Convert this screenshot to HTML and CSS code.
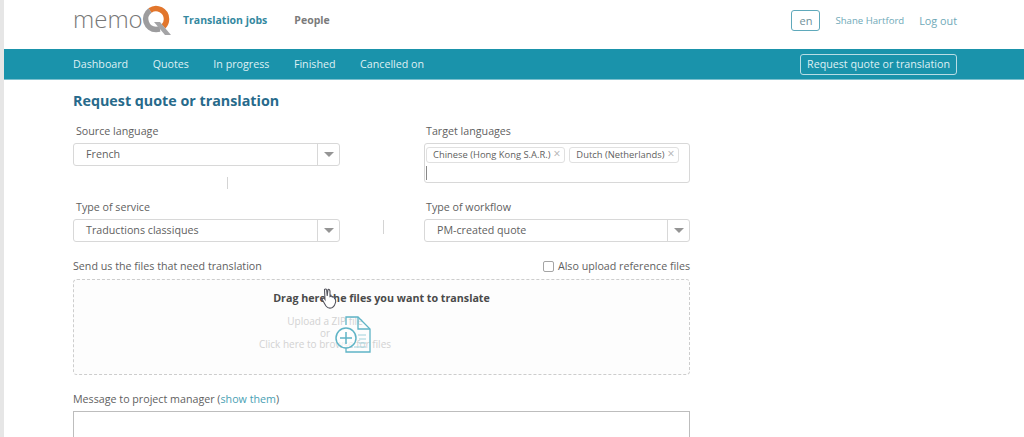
FILE: index.html
```html
<!DOCTYPE html>
<html lang="en">
<head>
<meta charset="utf-8">
<title>Request quote or translation</title>
<link rel="stylesheet" href="styles.css">
</head>
<body>
<header class="top">
  <a class="logo">
    <span class="logo-word">memo</span>
    <svg class="logo-q" width="29" height="32" viewBox="0 0 29 32" fill="none">
      <path d="M8 6.500A10.500 10.500 0 0 1 24.500 15A10.500 10.500 0 0 1 21.500 22.500" stroke="#e2762c" stroke-width="5.500"/>
      <path d="M8 6.500A10.500 10.500 0 0 0 14 25.500L18 25" stroke="#9c9c9e" stroke-width="5.500"/>
      <path d="M12 18L18 18L29 31L23 31Z" fill="#a4a4a6"/>
    </svg>
  </a>
  <a class="app-link active">Translation jobs</a>
  <a class="app-link">People</a>
  <div class="top-right">
    <span class="lang">en</span>
    <a class="user">Shane Hartford</a>
    <a class="logout">Log out</a>
  </div>
</header>
<nav class="bar">
  <a>Dashboard</a>
  <a>Quotes</a>
  <a>In progress</a>
  <a>Finished</a>
  <a>Cancelled on</a>
  <a class="bar-btn">Request quote or translation</a>
</nav>
<main class="content">
  <h1>Request quote or translation</h1>
  <div class="grid">
    <div class="field first">
      <label>Source language</label>
      <div class="select"><span>French</span><i class="arrow"></i></div>
      <i class="tick tick-a"></i>
    </div>
    <div class="field first">
      <label>Target languages</label>
      <div class="multi">
        <span class="chip">Chinese (Hong Kong S.A.R.)<b>×</b></span>
        <span class="chip">Dutch (Netherlands)<b>×</b></span>
        <span class="caret"></span>
      </div>
    </div>
    <div class="field">
      <label>Type of service</label>
      <div class="select"><span>Traductions classiques</span><i class="arrow"></i></div>
      <i class="tick tick-b"></i>
    </div>
    <div class="field">
      <label>Type of workflow</label>
      <div class="select"><span>PM-created quote</span><i class="arrow"></i></div>
    </div>
  </div>
  <div class="files-head">
    <span>Send us the files that need translation</span>
    <span class="check"><i class="box"></i>Also upload reference files</span>
  </div>
  <div class="drop">
    <strong>Drag here the files you want to translate</strong>
    <p>Upload a ZIP file<br>or<br>Click here to browse for files</p>
    <svg class="file-icon" width="42" height="40" viewBox="0 0 42 40" fill="none" stroke="#5fb4c6" stroke-width="1.300">
      <path d="M14 9V1H26L38 13V36H14V32"/>
      <path d="M26 1V13H38"/>
      <path d="M26 19H34M27 23H34M27 27H34M22 31H34" stroke-width="1" stroke="#9fd2dc"/>
      <circle cx="14" cy="22" r="10" fill="#ffffff" fill-opacity=".6" stroke-width="1.500"/>
      <path d="M14 16V28M8 22H20" stroke-width="1.500"/>
    </svg>
    <svg class="cursor" width="16" height="21" viewBox="0 0 16 21">
      <path d="M3.500 1.500C4.500 .5 5.500 1 5.700 2.500L6.200 8L7 1.500C8 1 9 2 9 3.500L9 8.500C10 7.800 11 8 11.300 9C12.300 8.700 13.300 9 13.500 10.500C14.500 11 15 12 14.500 14.500C14 17 13 18.500 11.500 19.500C9 20.500 6.500 20 5 18C3.500 15.500 2 13 1 11C1.500 9.500 3 10 4 11.500Z" fill="#ffffff" stroke="#55555e" stroke-width="1.100"/>
    </svg>
  </div>
  <div class="msg">
    <label>Message to project manager (<a>show them</a>)</label>
    <div class="textarea"></div>
  </div>
</main>
</body>
</html>
```
FILE: styles.css
```css
* { box-sizing: border-box; }
html, body { height: 100%; }
body {
  margin: 0;
  height: 437px;
  overflow: hidden;
  position: relative;
  background: #fff;
  border-left: 4px solid #e6e6e6;
  font-family: "Open Sans", "Liberation Sans", sans-serif;
  font-size: 10.700px;
  color: #5f5f5f;
}
.top {
  height: 49px;
  display: flex;
  align-items: center;
  padding: 0 67px 0 69px;
}
.logo {
  display: flex;
  align-items: flex-start;
  width: 110px;
  height: 49px;
}
.logo-word {
  font-size: 24px;
  font-weight: 300;
  line-height: 28px;
  margin-top: 5px;
  color: #777;
}
.logo-q { margin-left: -1px; margin-top: 4px; }
.app-link { font-weight: 700; font-size: 10.500px; color: #7b7b7b; margin-right: 27px; margin-top: -9px; }
.app-link.active { color: #35899f; }
.top-right {
  margin-left: auto;
  display: flex;
  align-items: center;
  margin-top: -9px;
  font-size: 9.600px;
  color: #6fa9b8;
}
.lang {
  width: 29px;
  height: 21px;
  border: 1px solid #5fa9bb;
  border-radius: 3px;
  display: flex;
  align-items: center;
  justify-content: center;
  font-size: 11px;
  color: #6f909a;
  margin-right: 15px;
}
.logout { margin-left: 15px; font-size: 10.800px; }
.bar {
  height: 31px;
  background: #1a93ab;
  border-bottom: 1px solid #7cc0ce;
  display: flex;
  align-items: center;
  padding: 0 67px 0 69px;
  gap: 24.500px;
  color: #dff0f4;
}
.bar-btn {
  margin-left: auto;
  border: 1px solid #b9dde5;
  border-radius: 3px;
  height: 21px;
  line-height: 18px;
  padding: 0 6px;
}
.content { width: 617px; margin-left: 69px; }
h1 {
  margin: 11px 0 0;
  font-size: 14.300px;
  line-height: 20px;
  font-weight: 700;
  color: #276a8b;
}
.grid {
  display: grid;
  grid-template-columns: 267px 266px;
  column-gap: 84px;
}
.field { position: relative; }
.field label {
  display: block;
  padding-left: 3px;
  line-height: 16px;
  height: 16px;
  margin-bottom: 4px;
}
.field.first { margin-top: 12px; height: 76px; }
.field:nth-child(even) label { padding-left: 2px; }
.select {
  height: 23px;
  border: 1px solid #d8d8d8;
  border-radius: 3px;
  display: flex;
  align-items: center;
  justify-content: space-between;
  padding-left: 12px;
}
.select span { margin-top: -1px; }
.arrow {
  width: 22px;
  height: 21px;
  border-left: 1px solid #d8d8d8;
  display: flex;
  align-items: center;
  justify-content: center;
}
.arrow::after {
  content: "";
  border-left: 5px solid transparent;
  border-right: 5px solid transparent;
  border-top: 5px solid #959595;
}
.multi {
  height: 40px;
  border: 1px solid #d8d8d8;
  border-radius: 3px;
  padding: 3px 1px;
  display: flex;
  flex-wrap: wrap;
  gap: 0 4px;
  align-content: flex-start;
}
.chip {
  height: 16px;
  line-height: 14px;
  border: 1px solid #e0e0e0;
  border-radius: 3px;
  padding: 0 4px 0 6px;
  font-size: 9.400px;
  white-space: nowrap;
}
.chip b { font-weight: 400; color: #b0b0b0; margin-left: 3px; font-size: 12px; line-height: 12px; }
.caret {
  flex: 0 0 100%;
  height: 14px;
  margin-top: 3px;
  border-left: 1px solid #888;
}
.tick { position: absolute; width: 1px; background: #d4d4d4; }
.tick-a { left: 154px; top: 54px; height: 12px; }
.tick-b { left: 310px; top: 21px; height: 14px; }
.files-head {
  display: flex;
  justify-content: space-between;
  align-items: center;
  margin-top: 16px;
  height: 16px;
}
.check { display: flex; align-items: center; }
.box {
  width: 11px;
  height: 11px;
  border: 1px solid #a5a5a5;
  border-radius: 2px;
  margin-right: 4px;
}
.drop {
  position: relative;
  height: 96px;
  margin-top: 5px;
  border: 1px dashed #cdcdcd;
  border-radius: 4px;
  background: #fdfdfd;
  text-align: center;
}
.drop strong {
  display: block;
  margin-top: 10px;
  line-height: 16px;
  color: #4a4a4a;
  font-size: 10.700px;
}
.drop p {
  margin: 10px 0 0 184px;
  width: 134px;
  line-height: 11.500px;
  font-size: 10px;
  color: #d2d2d2;
}
.file-icon { position: absolute; left: 258px; top: 36px; }
.cursor { position: absolute; left: 247px; top: 8px; }
.msg { margin-top: 16px; }
.msg label { display: block; line-height: 16px; }
.msg a { color: #4a9fb4; }
.textarea {
  height: 60px;
  margin-top: 4px;
  border: 1px solid #bdbdbd;
}
```
